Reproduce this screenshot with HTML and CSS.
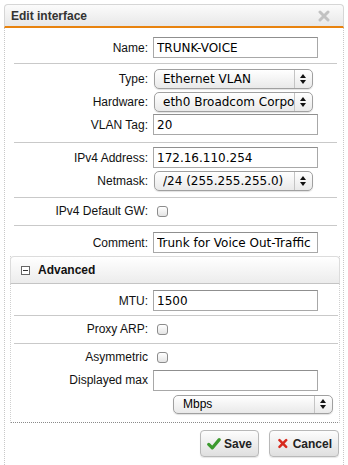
FILE: index.html
```html
<!DOCTYPE html>
<html lang="en">
<head>
  <meta charset="UTF-8" />
  <meta name="viewport" content="width=device-width, initial-scale=1.0" />
  <title>Edit interface</title>
  <link rel="stylesheet" href="styles.css">
</head>
<body>
  <div class="dialog">
    <div class="dialog-title">
      <span>Edit interface</span>
      <svg class="close" width="12" height="12" viewBox="0 0 12 12">
        <path d="M2 2 L10 10 M10 2 L2 10" stroke="#c2c2c2" stroke-width="3" stroke-linecap="round" />
      </svg>
    </div>

    <div class="dialog-body">
      <div class="group first">
        <div class="row">
          <label class="label">Name:</label>
          <input class="field" type="text" value="TRUNK-VOICE">
        </div>
      </div>

      <div class="group type-group">
        <div class="row">
          <label class="label">Type:</label>
          <span class="select">
            <select><option>Ethernet VLAN</option></select>
            <svg class="arrows" width="8" height="12" viewBox="0 0 8 12"><path d="M4 1 L7 5 L1 5 Z M4 11 L7 7 L1 7 Z" fill="#111"/></svg>
          </span>
        </div>
        <div class="row">
          <label class="label">Hardware:</label>
          <span class="select">
            <select><option>eth0 Broadcom Corpo</option></select>
            <svg class="arrows" width="8" height="12" viewBox="0 0 8 12"><path d="M4 1 L7 5 L1 5 Z M4 11 L7 7 L1 7 Z" fill="#111"/></svg>
          </span>
        </div>
        <div class="row">
          <label class="label">VLAN Tag:</label>
          <input class="field" type="text" value="20">
        </div>
      </div>

      <div class="group ip-group">
        <div class="row">
          <label class="label">IPv4 Address:</label>
          <input class="field" type="text" value="172.16.110.254">
        </div>
        <div class="row">
          <label class="label">Netmask:</label>
          <span class="select">
            <select><option>/24 (255.255.255.0)</option></select>
            <svg class="arrows" width="8" height="12" viewBox="0 0 8 12"><path d="M4 1 L7 5 L1 5 Z M4 11 L7 7 L1 7 Z" fill="#111"/></svg>
          </span>
        </div>
      </div>

      <div class="group gw-group">
        <div class="row check-row">
          <label class="label">IPv4 Default GW:</label>
          <input class="check" type="checkbox">
        </div>
      </div>

      <div class="group comment-group">
        <div class="row">
          <label class="label">Comment:</label>
          <input class="field" type="text" value="Trunk for Voice Out-Traffic">
        </div>
      </div>

      <div class="advanced">
        <div class="advanced-head">
          <span class="minus"></span>
          <span>Advanced</span>
        </div>
        <div class="group mtu-group">
          <div class="row">
            <label class="label">MTU:</label>
            <input class="field" type="text" value="1500">
          </div>
        </div>
        <div class="group proxy-group">
          <div class="row check-row">
            <label class="label">Proxy ARP:</label>
            <input class="check" type="checkbox">
          </div>
        </div>
        <div class="group asym-group">
          <div class="row check-row">
            <label class="label">Asymmetric</label>
            <input class="check" type="checkbox">
          </div>
          <div class="row tall">
            <label class="label">Displayed max</label>
            <input class="field" type="text" value="">
          </div>
          <div class="row tall">
            <span class="select unit">
              <select><option>Mbps</option></select>
              <svg class="arrows" width="8" height="12" viewBox="0 0 8 12"><path d="M4 1 L7 5 L1 5 Z M4 11 L7 7 L1 7 Z" fill="#111"/></svg>
            </span>
          </div>
        </div>
      </div>

      <div class="actions">
        <button class="btn save" type="button">
          <svg width="16" height="14" viewBox="0 0 16 14"><path d="M2 7.5 L6 11.5 L14 2" fill="none" stroke="#3c9a2e" stroke-width="3.6" stroke-linecap="round" stroke-linejoin="round"/></svg>
          Save
        </button>
        <button class="btn cancel" type="button">
          <svg width="13" height="13" viewBox="0 0 13 13"><path d="M2 2 L11 11 M11 2 L2 11" stroke="#d72a1e" stroke-width="3.4" stroke-linecap="round"/></svg>
          Cancel
        </button>
      </div>
    </div>
  </div>
</body>
</html>
```

FILE: styles.css
```css
* {
  box-sizing: border-box;
}
body {
  margin: 0;
  background-color: #ffffff;
  font-family: "Liberation Sans", Arial, sans-serif;
  font-size: 12px;
  color: #111;
}
.dialog {
  margin: 4px 4px 0;
  width: 340px;
}
.dialog-title {
  height: 24px;
  display: flex;
  align-items: center;
  justify-content: space-between;
  padding: 0 13px 0 6px;
  border: 1px solid #d6d6d6;
  border-bottom: 2px solid #e8830f;
  border-radius: 4px 4px 0 0;
  background: linear-gradient(#fbfbfb, #e8e8e8);
  font-weight: bold;
  color: #333;
}
.dialog-body {
  border-left: 1px dotted #c8c8c8;
  border-right: 1px dotted #c8c8c8;
  height: 437px;
}
.group {
  margin: 0 6px 0 9px;
  border-bottom: 1px solid #c9c9c9;
}
.first { padding: 8px 0 4px; }
.type-group { padding: 3px 0 6px; }
.ip-group { padding: 3px 0 5px; }
.gw-group { padding: 2px 0 3px; }
.comment-group {
  padding: 5px 0 2px;
  border-bottom: none;
}
.row {
  display: flex;
  align-items: center;
  height: 23px;
}
.row.check-row {
  height: 22px;
}
.row.tall {
  height: 24px;
}
.label {
  width: 139px;
  padding-right: 5px;
  text-align: right;
  color: #111;
}
.field {
  width: 165px;
  height: 21px;
  padding: 0 3px;
  border: 1px solid #a8a8a8;
  border-top-color: #8f8f8f;
  font-family: "DejaVu Sans", Verdana, sans-serif;
  font-size: 12px;
  color: #000;
  background: #fff;
}
.select {
  position: relative;
  display: block;
  margin-left: 1px;
  width: 159px;
  height: 20px;
}
.select select {
  appearance: none;
  -webkit-appearance: none;
  width: 100%;
  height: 100%;
  padding: 0 18px 0 8px;
  border: 1px solid #a0a0a0;
  border-radius: 5px;
  background: linear-gradient(#ffffff, #e9e9e9);
  font-family: "DejaVu Sans", Verdana, sans-serif;
  font-size: 12px;
  color: #000;
  box-shadow: 0 1px 1px rgba(0,0,0,0.12);
}
.select::after {
  content: "";
  position: absolute;
  top: 1px;
  bottom: 1px;
  right: 18px;
  border-left: 1px solid #c4c4c4;
}
.select .arrows {
  position: absolute;
  right: 6px;
  top: 4px;
}
.select.unit {
  margin-left: 159px;
  width: 160px;
  height: 19px;
}
.select.unit select {
  font-family: "Liberation Sans", Arial, sans-serif;
  padding-left: 9px;
}
.select.unit .arrows {
  top: 3px;
}
.check {
  appearance: none;
  -webkit-appearance: none;
  margin: 0 0 0 4px;
  width: 11px;
  height: 11px;
  border: 1px solid #8c8c8c;
  border-radius: 3px;
  background: linear-gradient(#ffffff, #e4e4e4);
}
.advanced {
  margin: 0 3px 0 5px;
  border-left: 1px dotted #d0d0d0;
  border-right: 1px dotted #d0d0d0;
  border-bottom: 1px dotted #8a8a8a;
}
.advanced-head {
  height: 28px;
  display: flex;
  align-items: center;
  gap: 8px;
  margin: 0 -1px;
  padding-left: 10px;
  border: 1px solid #dcdcdc;
  border-bottom: 1px solid #c4c4c4;
  border-radius: 4px 4px 0 0;
  background: linear-gradient(#ffffff, #ececec);
  font-weight: bold;
  color: #111;
}
.minus {
  position: relative;
  width: 9px;
  height: 9px;
  border: 1px solid #666;
  background: #fff;
}
.minus::after {
  content: "";
  position: absolute;
  left: 1px;
  right: 1px;
  top: 3px;
  border-top: 1px solid #333;
}
.advanced .group {
  margin: 0 1px 0 3px;
}
.mtu-group { padding: 5px 0 3px; }
.proxy-group { padding: 2px 0 3px; }
.asym-group {
  padding: 2px 0 6px;
  border-bottom: none !important;
}
.actions {
  display: flex;
  justify-content: flex-end;
  gap: 10px;
  margin-top: 7px;
  padding-right: 4px;
}
.btn {
  display: flex;
  align-items: center;
  gap: 3px;
  height: 27px;
  padding: 0 6px;
  border: 1px solid #b8b8b8;
  border-radius: 4px;
  background: linear-gradient(#fdfdfd, #dfdfdf);
  box-shadow: 0 1px 1px rgba(0,0,0,0.1);
  font-family: "Liberation Sans", Arial, sans-serif;
  font-size: 12px;
  font-weight: bold;
  color: #222;
}
.save {
  width: 59px;
}
.cancel {
  width: 70px;
  gap: 5px;
  padding-left: 8px;
}
```
